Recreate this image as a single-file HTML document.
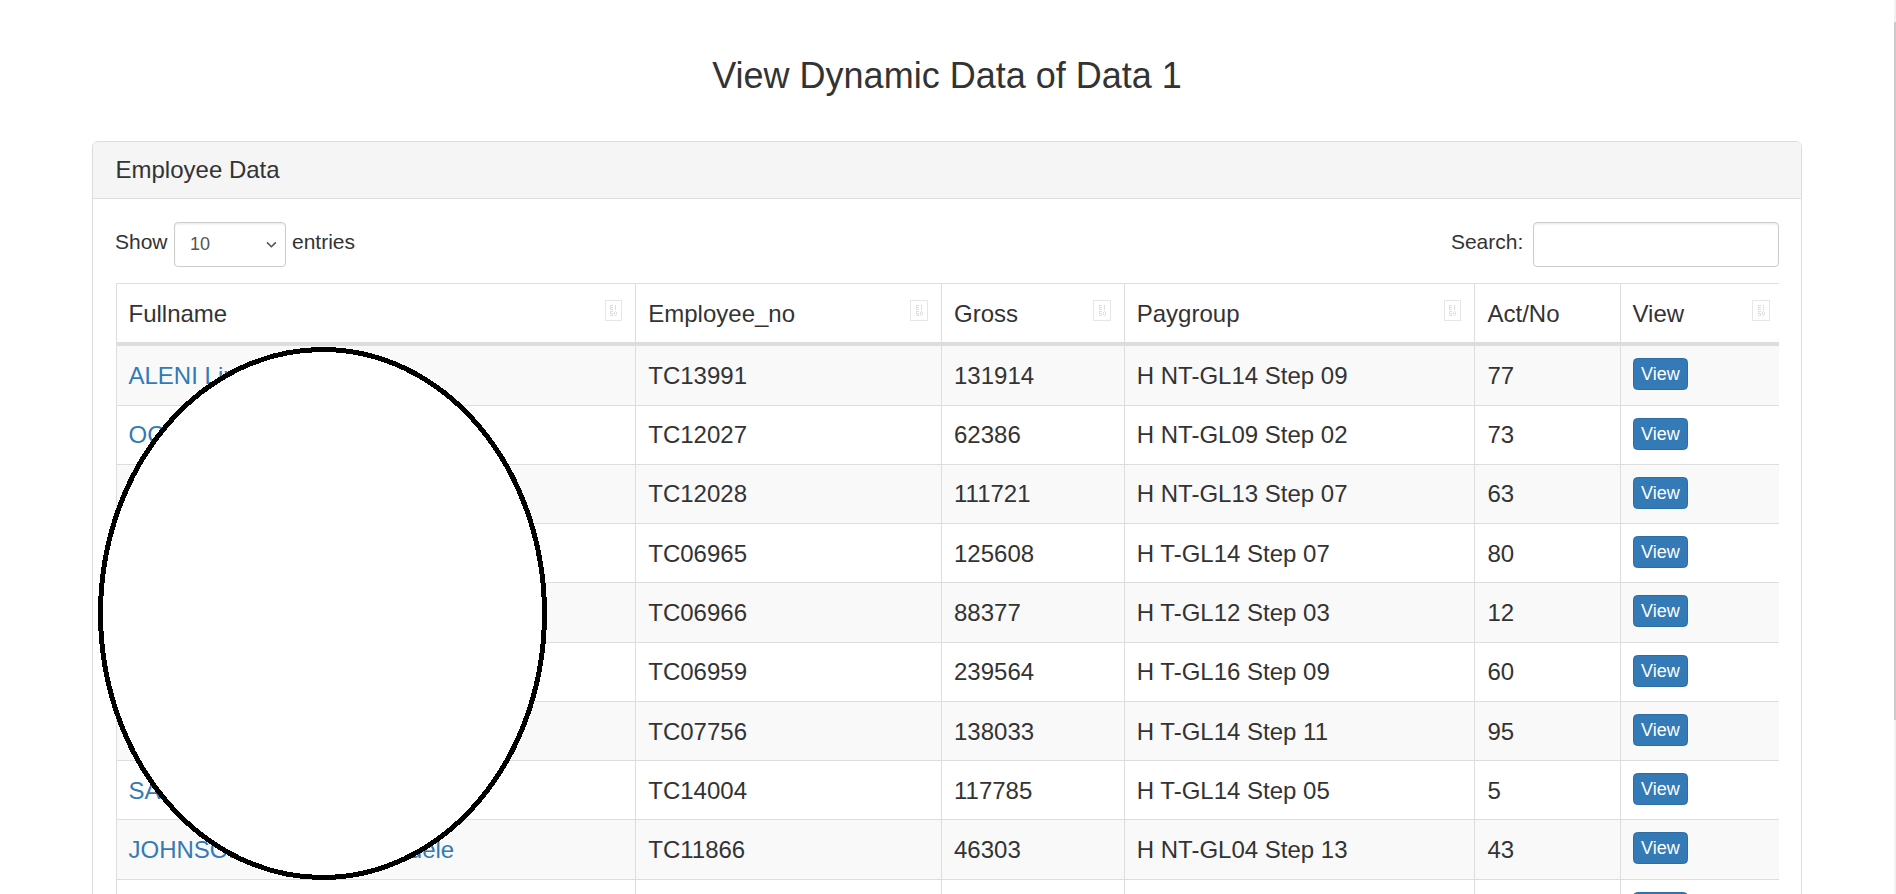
<!DOCTYPE html>
<html>
<head>
<meta charset="utf-8">
<title>View Dynamic Data</title>
<style>
*{box-sizing:border-box}
html,body{margin:0;padding:0}
body{width:1896px;height:894px;overflow:hidden;background:#fff;color:#333;font-family:"Liberation Sans",sans-serif;font-size:21px;line-height:30px;position:relative}
#page{position:absolute;left:0;top:0;width:1894px;height:894px;overflow:hidden}
#sb{position:absolute;left:1894px;top:0;width:2px;height:894px;background:#f1f1f1}
#sb i{position:absolute;left:0;top:22px;width:2px;height:698px;background:#cbcbcb;display:block}
h3.title{position:absolute;left:0;top:55.7px;width:1894px;margin:0;text-align:center;font-size:36px;line-height:39.6px;font-weight:400;color:#333;white-space:nowrap}
.panel{position:absolute;left:92px;top:141px;width:1710px;height:900px;border:1px solid #ddd;border-radius:6px;background:#fff;box-shadow:0 1px 1px rgba(0,0,0,.05)}
.panel-heading{padding:15px 22.5px;background:#f5f5f5;border-bottom:1px solid #ddd;border-radius:5px 5px 0 0;height:57.4px}
.panel-title{margin:0;font-size:24px;line-height:26.4px;font-weight:400;color:#333}
.panel-body{padding:22.5px 22.5px}
.dtrow{position:relative;height:52.5px}
.len{position:absolute;left:-0.5px;top:-1px;white-space:nowrap;line-height:30px}
.len .sel{display:inline-block;vertical-align:middle;width:112px;height:45px;border:1px solid #ccc;border-radius:4px;background:#fff;box-shadow:inset 0 1.5px 1.5px rgba(0,0,0,.075);color:#555;font-size:18px;line-height:27px;padding:8.5px 0 0 15px;position:relative;top:1px;margin:0 0.3px 0 0.5px}
.len .sel svg{position:absolute;left:91px;top:18px}
.flt{position:absolute;right:0;top:-1px;white-space:nowrap;line-height:30px}
.flt .inp{display:inline-block;vertical-align:middle;width:246px;height:45px;border:1px solid #ccc;border-radius:4px;background:#fff;box-shadow:inset 0 1.5px 1.5px rgba(0,0,0,.075);margin-left:9.25px;position:relative;top:1px}
.tw{margin-top:9px;width:1663px;overflow:hidden}
table{border-collapse:separate;border-spacing:0;table-layout:fixed;width:1755px;border:1px solid #ddd;border-right:0;font-size:24px;line-height:34.28125px;color:#333}
th{font-weight:400;text-align:left;vertical-align:bottom;line-height:34px;padding:13px 45px 10.84375px 12px;border-right:1px solid #ddd;border-bottom:3px solid #ddd;position:relative;white-space:nowrap}
td{padding:12.640625px 12px 11.359375px;border-top:1px solid #ddd;border-right:1px solid #ddd;white-space:nowrap;vertical-align:top;overflow:hidden}
tbody tr:nth-child(odd) td{background:#f9f9f9}
th:nth-child(2),td:nth-child(2){padding-left:12.75px}
th:nth-child(3),td:nth-child(3){padding-left:12.5px}
th:nth-child(4),td:nth-child(4){padding-left:12.25px}
th:nth-child(5),td:nth-child(5){padding-left:13px}
a.n{color:#337ab7;text-decoration:none}
.btn{display:block;position:relative;top:-0.640625px;width:55px;height:32px;background:#337ab7;border:1px solid #2e6da4;border-radius:4.5px;color:#fff;font-size:18px;line-height:27px;padding:2px 0 1px 0.8px;text-align:center}
.tofu{position:absolute;right:13px;top:16px;width:18px;height:21px;display:block}
#ell{position:absolute;left:90px;top:340px;width:470px;height:554px}
</style>
</head>
<body>
<div id="page">
<h3 class="title">View Dynamic Data of Data 1</h3>
<div class="panel">
  <div class="panel-heading"><h3 class="panel-title">Employee Data</h3></div>
  <div class="panel-body">
    <div class="dtrow">
      <div class="len">Show <span class="sel">10<svg width="12" height="8" viewBox="0 0 12 8"><path d="M1 1.4 L5.4 5.8 L9.8 1.4" fill="none" stroke="#505050" stroke-width="1.5"/></svg></span> entries</div>
      <div class="flt">Search:<span class="inp"></span></div>
    </div>
    <div class="tw">
    <table>
      <colgroup><col style="width:519px"><col style="width:306px"><col style="width:183px"><col style="width:350px"><col style="width:146px"><col style="width:250px"></colgroup>
      <thead><tr>
        <th>Fullname<svg class="tofu" viewBox="0 0 18 21"><g shape-rendering="crispEdges"><rect x="1.5" y="0.5" width="16" height="20" fill="none" stroke="#e6e6e6" stroke-width="1"/><g fill="#e0e0e0"><rect x="6" y="5" width="1" height="5"/><rect x="7" y="5" width="2" height="1"/><rect x="7" y="7" width="2" height="1"/><rect x="7" y="9" width="2" height="1"/><rect x="11" y="5" width="1" height="5"/><rect x="6" y="11" width="3" height="1"/><rect x="6" y="12" width="1" height="1"/><rect x="6" y="13" width="3" height="1"/><rect x="8" y="14" width="1" height="1"/><rect x="6" y="15" width="3" height="1"/><rect x="10" y="12" width="1" height="3"/><rect x="12" y="12" width="1" height="3"/><rect x="11" y="11" width="1" height="1"/><rect x="11" y="15" width="1" height="1"/></g></g></svg></th>
        <th>Employee_no<svg class="tofu" viewBox="0 0 18 21"><g shape-rendering="crispEdges"><rect x="0.5" y="0.5" width="17" height="20" fill="none" stroke="#e6e6e6" stroke-width="1"/><g fill="#e0e0e0"><rect x="6" y="5" width="1" height="5"/><rect x="7" y="5" width="2" height="1"/><rect x="7" y="7" width="2" height="1"/><rect x="7" y="9" width="2" height="1"/><rect x="11" y="5" width="1" height="5"/><rect x="6" y="11" width="3" height="1"/><rect x="6" y="12" width="1" height="1"/><rect x="6" y="13" width="3" height="1"/><rect x="8" y="14" width="1" height="1"/><rect x="6" y="15" width="3" height="1"/><rect x="10" y="12" width="1" height="3"/><rect x="12" y="12" width="1" height="3"/><rect x="11" y="11" width="1" height="1"/><rect x="11" y="15" width="1" height="1"/></g></g></svg></th>
        <th>Gross<svg class="tofu" viewBox="0 0 18 21"><g shape-rendering="crispEdges"><rect x="0.5" y="0.5" width="17" height="20" fill="none" stroke="#e6e6e6" stroke-width="1"/><g fill="#e0e0e0"><rect x="6" y="5" width="1" height="5"/><rect x="7" y="5" width="2" height="1"/><rect x="7" y="7" width="2" height="1"/><rect x="7" y="9" width="2" height="1"/><rect x="11" y="5" width="1" height="5"/><rect x="6" y="11" width="3" height="1"/><rect x="6" y="12" width="1" height="1"/><rect x="6" y="13" width="3" height="1"/><rect x="8" y="14" width="1" height="1"/><rect x="6" y="15" width="3" height="1"/><rect x="10" y="12" width="1" height="3"/><rect x="12" y="12" width="1" height="3"/><rect x="11" y="11" width="1" height="1"/><rect x="11" y="15" width="1" height="1"/></g></g></svg></th>
        <th>Paygroup<svg class="tofu" viewBox="0 0 18 21"><g shape-rendering="crispEdges"><rect x="1.5" y="0.5" width="16" height="20" fill="none" stroke="#e6e6e6" stroke-width="1"/><g fill="#e0e0e0"><rect x="6" y="5" width="1" height="5"/><rect x="7" y="5" width="2" height="1"/><rect x="7" y="7" width="2" height="1"/><rect x="7" y="9" width="2" height="1"/><rect x="11" y="5" width="1" height="5"/><rect x="6" y="11" width="3" height="1"/><rect x="6" y="12" width="1" height="1"/><rect x="6" y="13" width="3" height="1"/><rect x="8" y="14" width="1" height="1"/><rect x="6" y="15" width="3" height="1"/><rect x="10" y="12" width="1" height="3"/><rect x="12" y="12" width="1" height="3"/><rect x="11" y="11" width="1" height="1"/><rect x="11" y="15" width="1" height="1"/></g></g></svg></th>
        <th>Act/No</th>
        <th>View<svg class="tofu" style="right:auto;left:131px" viewBox="0 0 18 21"><g shape-rendering="crispEdges"><rect x="0.5" y="0.5" width="17" height="20" fill="none" stroke="#e6e6e6" stroke-width="1"/><g fill="#e0e0e0"><rect x="6" y="5" width="1" height="5"/><rect x="7" y="5" width="2" height="1"/><rect x="7" y="7" width="2" height="1"/><rect x="7" y="9" width="2" height="1"/><rect x="11" y="5" width="1" height="5"/><rect x="6" y="11" width="3" height="1"/><rect x="6" y="12" width="1" height="1"/><rect x="6" y="13" width="3" height="1"/><rect x="8" y="14" width="1" height="1"/><rect x="6" y="15" width="3" height="1"/><rect x="10" y="12" width="1" height="3"/><rect x="12" y="12" width="1" height="3"/><rect x="11" y="11" width="1" height="1"/><rect x="11" y="15" width="1" height="1"/></g></g></svg></th>
      </tr></thead>
      <tbody>
        <tr><td><a class="n">ALENI Linda Ngozi</a></td><td>TC13991</td><td>131914</td><td>H NT-GL14 Step 09</td><td>77</td><td><span class="btn">View</span></td></tr>
        <tr><td><a class="n">OCHE Samuel Ameh</a></td><td>TC12027</td><td>62386</td><td>H NT-GL09 Step 02</td><td>73</td><td><span class="btn">View</span></td></tr>
        <tr><td><a class="n">OKORO Grace Ada</a></td><td>TC12028</td><td>111721</td><td>H NT-GL13 Step 07</td><td>63</td><td><span class="btn">View</span></td></tr>
        <tr><td><a class="n">BELLO Musa Ibrahim</a></td><td>TC06965</td><td>125608</td><td>H T-GL14 Step 07</td><td>80</td><td><span class="btn">View</span></td></tr>
        <tr><td><a class="n">EZE Chinedu Paul</a></td><td>TC06966</td><td>88377</td><td>H T-GL12 Step 03</td><td>12</td><td><span class="btn">View</span></td></tr>
        <tr><td><a class="n">ADAMU Fatima Zara</a></td><td>TC06959</td><td>239564</td><td>H T-GL16 Step 09</td><td>60</td><td><span class="btn">View</span></td></tr>
        <tr><td><a class="n">UDOH Emem Peter</a></td><td>TC07756</td><td>138033</td><td>H T-GL14 Step 11</td><td>95</td><td><span class="btn">View</span></td></tr>
        <tr><td><a class="n">SANI Yusuf Garba</a></td><td>TC14004</td><td>117785</td><td>H T-GL14 Step 05</td><td>5</td><td><span class="btn">View</span></td></tr>
        <tr><td><a class="n" style="word-spacing:-0.35px">JOHNSON Oluwaseyi Ayodele</a></td><td>TC11866</td><td>46303</td><td>H NT-GL04 Step 13</td><td>43</td><td><span class="btn">View</span></td></tr>
        <tr><td><a class="n">&nbsp;</a></td><td>&nbsp;</td><td>&nbsp;</td><td>&nbsp;</td><td>&nbsp;</td><td><span class="btn">View</span></td></tr>
        <tr><td>&nbsp;</td><td></td><td></td><td></td><td></td><td></td></tr>
      </tbody>
    </table>
    </div>
  </div>
</div>
<svg id="ell" viewBox="90 340 470 554" shape-rendering="crispEdges"><ellipse cx="322.5" cy="613.5" rx="222" ry="264" fill="#fff" stroke="#000" stroke-width="5"/></svg>
</div>
<div id="sb"><i></i></div>
</body>
</html>
